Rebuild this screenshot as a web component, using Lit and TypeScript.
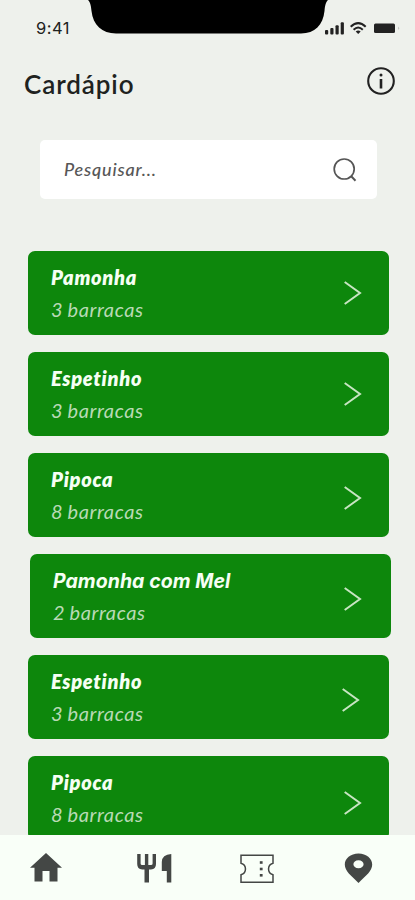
import { LitElement, html, css, svg } from "lit";
import { customElement, state } from "lit/decorators.js";
import { classMap } from "lit/directives/class-map.js";

interface Item {
  name: string;
  stalls: number;
  kind: string;
}

@customElement("app-root")
export class AppRoot extends LitElement {
  @state() private items: Item[] = [
    { name: "Pamonha", stalls: 3, kind: "pamonha" },
    { name: "Espetinho", stalls: 3, kind: "espetinho" },
    { name: "Pipoca", stalls: 8, kind: "pipoca low" },
    { name: "Pamonha com Mel", stalls: 2, kind: "mel low" },
    { name: "Espetinho", stalls: 3, kind: "espetinho low near" },
    { name: "Pipoca", stalls: 8, kind: "pipoca lower" },
  ];

  static styles = css`
    :host {
      display: flex;
      flex-direction: column;
      box-sizing: border-box;
      width: 415px;
      height: 900px;
      overflow: hidden;
      background: #eef1ec;
      font-family: Lato, "Open Sans", sans-serif;
      font-variant-ligatures: none;
      color: #202220;
    }
    svg { display: block; flex: none; }
    .status {
      display: flex;
      height: 50px;
      flex: none;
    }
    .time {
      width: 88px;
      box-sizing: border-box;
      padding: 18px 0 0 36px;
      font: 400 16.5px/20px Inter, sans-serif;
      letter-spacing: 0.5px;
    }
    .signals { padding-top: 20px; margin-left: -3px; }
    .head {
      display: flex;
      justify-content: space-between;
      align-items: flex-start;
      padding: 16px 19px 0 24px;
      height: 90px;
      box-sizing: border-box;
      flex: none;
    }
    h1 {
      margin: 2px 0 0;
      font-size: 26px;
      line-height: 32px;
      font-weight: 600;
      letter-spacing: 0.9px;
    }
    .search {
      display: flex;
      align-items: center;
      justify-content: space-between;
      height: 59px;
      margin: 0 38px 52px 40px;
      padding: 0 20px 0 24px;
      border-radius: 5px;
      background: #fff;
      flex: none;
    }
    .hint {
      color: #575757;
      font-size: 18px;
      line-height: 22px;
      margin-top: -2px;
      font-style: italic;
      font-weight: 500;
      letter-spacing: 0.8px;
    }
    .list {
      display: flex;
      flex-direction: column;
      gap: 17px;
      flex: 1;
      min-height: 0;
      overflow: hidden;
      padding-left: 28px;
    }
    .card {
      display: flex;
      justify-content: space-between;
      box-sizing: border-box;
      width: 361px;
      height: 84px;
      flex: none;
      padding: 10px 27px 0 23px;
      border-radius: 7px;
      background: #0d870c;
      font-style: italic;
    }
    .mel { margin-left: 2px; padding-right: 29px; }
    .near { padding-right: 29px; }
    .name {
      color: #f6fff4;
      font-size: 20px;
      line-height: 32px;
      font-weight: 800;
      letter-spacing: 0.7px;
    }
    .mel .name {
      padding-top: 2px;
      line-height: 30px;
      font-family: Inter, sans-serif;
      font-size: 19.5px;
      font-weight: 700;
      letter-spacing: 0.05px;
    }
    .sub {
      color: #b9dab5;
      font-size: 20px;
      line-height: 32px;
      letter-spacing: 0.6px;
      word-spacing: -1px;
    }
    .chev { margin-top: 20px; }
    .low .chev { margin-top: 23px; }
    .lower .chev { margin-top: 25px; }
    .nav {
      display: flex;
      height: 65px;
      flex: none;
      background: #f9fff8;
    }
  `;

  private card(item: Item) {
    const classes = Object.fromEntries(item.kind.split(" ").map((k) => [k, true]));
    return html`<article class=${classMap({ card: true, ...classes })}>
      <div>
        <div class="name"><span>${item.name}</span></div>
        <div class="sub"><span>${item.stalls} barracas</span></div>
      </div>
      <svg class="chev" width="18" height="24" viewBox="0 0 18 24" fill="none">
        <path d="M.7 1 16 12 .7 23" stroke="#c8e5c3" stroke-width="2" />
      </svg>
    </article>`;
  }

  render() {
    return html`
      <header class="status">
        <div class="time">9:41</div>
        <svg width="240" height="34" viewBox="0 0 240 34">
          <path d="M0 0C2 2 3 5 3.5 11C5 25 14 33.5 28 33.5H213C227 33.5 235 25 236.5 11C237 5 238 2 240 0Z" />
        </svg>
        <svg class="signals" width="75" height="16" viewBox="0 0 75 16" fill="#222">
          <rect y="10" width="3.2" height="4.5" rx="1" />
          <rect x="5.3" y="8" width="3.2" height="6.5" rx="1" />
          <rect x="10.5" y="5.2" width="3.2" height="9.3" rx="1" />
          <rect x="15.7" y="2.3" width="3.2" height="12.2" rx="1" />
          <g fill="none" stroke="#222" stroke-width="2">
            <path d="M25.7 6.7Q33.2-.5 40.7 6.7M28.6 9.7Q33.2 5.3 37.8 9.7" />
          </g>
          <path d="M30.7 11.4Q33.2 9.6 35.7 11.4L33.2 14Z" />
          <rect x="49" y="3.5" width="21" height="9.5" rx="1.5" />
          <path d="M73.5 6.5Q75 8.2 73.5 10Z" fill="#999" />
        </svg>
      </header>
      <div class="head">
        <h1><span>Cardápio</span></h1>
        <svg width="30" height="30" viewBox="0 0 30 30">
          <circle cx="15" cy="15" r="12.8" fill="none" stroke="#222" stroke-width="2.1" />
          <circle cx="15" cy="9" r="1.5" fill="#222" />
          <path d="M15 13V22.5" stroke="#222" stroke-width="2.6" />
        </svg>
      </div>
      <div class="search">
        <span class="hint">Pesquisar...</span>
        <svg width="24" height="26" viewBox="0 0 24 26" fill="none" stroke="#555" stroke-width="1.7">
          <circle cx="11.2" cy="12" r="10" />
          <path d="M18 19 22.5 23.7" stroke-width="2" />
        </svg>
      </div>
      <main class="list">${this.items.map((i) => this.card(i))}</main>
      <nav class="nav">
        <svg width="415" height="65" viewBox="0 0 415 65" fill="#444745">
          <path d="M46 18 62 32.8H57.5V46.5H49.5V36H42.5V46.5H34.5V32.8H30Z" />
          <path d="M137.2 19H140.6V28.5Q140.6 30 142.2 30H144.9V19H148.3V30H151Q152.6 30 152.6 28.5V19H156V29Q156 34 151 34.5H149V47.5H144.5V34.5H142.2Q137.2 34 137.2 29Z" />
          <path d="M171.3 19V47.5H166.8V36H161.8V27Q162 19.5 171.3 19Z" />
          <path d="M241 20.3H273V28.2A6 6 0 0 0 273 39.8V47.2H241V39.8A6 6 0 0 0 241 28.2Z" fill="none" stroke="#444745" stroke-width="1.5" />
          ${[27.5, 34, 40.3].map((y) => svg`<rect x="259.8" y=${y - 1.3} width="2.8" height="2.6" />`)}
          <path fill-rule="evenodd" d="M358.5 18.5C350.5 18.5 344.8 23.5 344.8 29.5C344.8 36 351 40.5 358.5 48C366 40.5 372.2 36 372.2 29.5C372.2 23.5 366.5 18.5 358.5 18.5ZM358.5 25.2C361.5 25.2 363.6 27 363.6 29.2S361.5 33.2 358.5 33.2S353.4 31.4 353.4 29.2S355.5 25.2 358.5 25.2Z" />
        </svg>
      </nav>
    `;
  }
}
